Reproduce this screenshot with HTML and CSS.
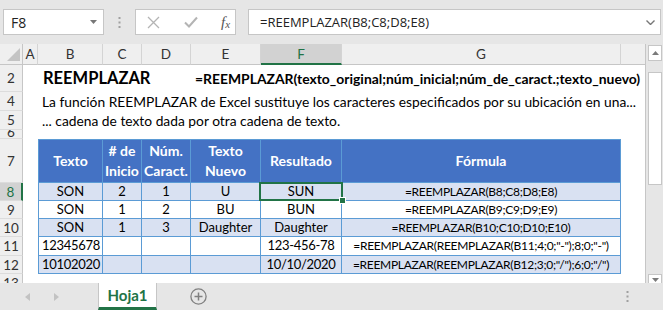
FILE: index.html
```html
<!DOCTYPE html>
<html>
<head>
  <title>REEMPLAZAR - Hoja1</title>
  <meta charset="UTF-8">
  <link rel="stylesheet" href="styles.css">
</head>
<body>
  <div class="app">
    <div class="formula-bar">
      <div class="name-box">
        <span>F8</span>
        <svg width="7" height="4" viewBox="0 0 7 4"><path d="M0 0h7L3.5 4z" fill="#777"/></svg>
      </div>
      <div class="grip">
        <svg width="3" height="11" viewBox="0 0 3 11"><rect x="0.5" y="0" width="2" height="2" fill="#a0a0a0"/><rect x="0.5" y="4.5" width="2" height="2" fill="#a0a0a0"/><rect x="0.5" y="9" width="2" height="2" fill="#a0a0a0"/></svg>
      </div>
      <div class="fx-buttons">
        <svg class="fx-icon" width="13" height="13" viewBox="0 0 13 13"><path d="M1 1l11 11M12 1L1 12" stroke="#b4b4b4" stroke-width="1.3" fill="none"/></svg>
        <svg class="fx-icon" width="14" height="12" viewBox="0 0 14 12"><path d="M1 6.5l4 4L13 1.5" stroke="#b4b4b4" stroke-width="2" fill="none"/></svg>
        <span class="fx-label">f<sub>x</sub></span>
      </div>
      <div class="formula-input">
        <span>=REEMPLAZAR(B8;C8;D8;E8)</span>
        <svg width="9" height="5" viewBox="0 0 9 5"><path d="M0.5 0.5l4 4 4-4" stroke="#777" stroke-width="1.4" fill="none"/></svg>
      </div>
    </div>

    <div class="workspace">
      <div class="sheet">
        <div class="row col-heads">
          <div class="rh corner"><svg width="13" height="13" viewBox="0 0 13 13"><path d="M13 0v13H0z" fill="#c4c4c4"/></svg></div>
          <div class="hd ca">A</div>
          <div class="hd cb">B</div>
          <div class="hd cc">C</div>
          <div class="hd cd">D</div>
          <div class="hd ce">E</div>
          <div class="hd cf selected">F</div>
          <div class="hd cg">G</div>
          <div class="hd ch"></div>
        </div>

        <div class="row r2">
          <div class="rh">2</div>
          <div class="c ca"></div>
          <div class="c cb"><span class="title">REEMPLAZAR</span></div>
          <div class="c cc"></div>
          <div class="c cd"></div>
          <div class="c ce"><span class="syntax">=REEMPLAZAR(texto_original;núm_inicial;núm_de_caract.;texto_nuevo)</span></div>
        </div>
        <div class="row r4">
          <div class="rh">4</div>
          <div class="c ca"></div>
          <div class="c cb"><span class="desc">La función REEMPLAZAR de Excel sustituye los caracteres especificados por su ubicación en una...</span></div>
        </div>
        <div class="row r5">
          <div class="rh">5</div>
          <div class="c ca"></div>
          <div class="c cb"><span class="desc">... cadena de texto dada por otra cadena de texto.</span></div>
        </div>
        <div class="row r6">
          <div class="rh">6</div>
        </div>

        <div class="row r7">
          <div class="rh">7</div>
          <div class="c ca"></div>
          <div class="t th cb first">Texto</div>
          <div class="t th cc"># de<br>Inicio</div>
          <div class="t th cd">Núm.<br>Caract.</div>
          <div class="t th ce">Texto<br>Nuevo</div>
          <div class="t th cf">Resultado</div>
          <div class="t th cg">Fórmula</div>
        </div>
        <div class="row data band">
          <div class="rh active">8</div>
          <div class="c ca"></div>
          <div class="t cb first">SON</div>
          <div class="t cc">2</div>
          <div class="t cd">1</div>
          <div class="t ce">U</div>
          <div class="t cf current">SUN<span class="sel"><span class="handle"></span></span></div>
          <div class="t cg formula">=REEMPLAZAR(B8;C8;D8;E8)</div>
        </div>
        <div class="row data">
          <div class="rh">9</div>
          <div class="c ca"></div>
          <div class="t cb first">SON</div>
          <div class="t cc">1</div>
          <div class="t cd">2</div>
          <div class="t ce">BU</div>
          <div class="t cf">BUN</div>
          <div class="t cg formula">=REEMPLAZAR(B9;C9;D9;E9)</div>
        </div>
        <div class="row data band">
          <div class="rh">10</div>
          <div class="c ca"></div>
          <div class="t cb first">SON</div>
          <div class="t cc">1</div>
          <div class="t cd">3</div>
          <div class="t ce">Daughter</div>
          <div class="t cf">Daughter</div>
          <div class="t cg formula">=REEMPLAZAR(B10;C10;D10;E10)</div>
        </div>
        <div class="row data r11">
          <div class="rh">11</div>
          <div class="c ca"></div>
          <div class="t cb first left num">12345678</div>
          <div class="t cc"></div>
          <div class="t cd"></div>
          <div class="t ce"></div>
          <div class="t cf num">123-456-78</div>
          <div class="t cg formula">=REEMPLAZAR(REEMPLAZAR(B11;4;0;"-");8;0;"-")</div>
        </div>
        <div class="row data band">
          <div class="rh">12</div>
          <div class="c ca"></div>
          <div class="t cb first left num">10102020</div>
          <div class="t cc"></div>
          <div class="t cd"></div>
          <div class="t ce"></div>
          <div class="t cf num">10/10/2020</div>
          <div class="t cg formula">=REEMPLAZAR(REEMPLAZAR(B12;3;0;"/");6;0;"/")</div>
        </div>
        <div class="row data">
          <div class="rh">13</div>
        </div>
      </div>

      <div class="vscroll">
        <div class="sb-btn"><svg width="7" height="4" viewBox="0 0 7 4"><path d="M0 4h7L3.5 0z" fill="#7a7a7a"/></svg></div>
        <div class="sb-thumb"></div>
        <div class="sb-space"></div>
        <div class="sb-btn down"><svg width="7" height="4" viewBox="0 0 7 4"><path d="M0 0h7L3.5 4z" fill="#7a7a7a"/></svg></div>
      </div>
    </div>

    <div class="tabs">
      <div class="tab-nav">
        <svg width="5" height="8" viewBox="0 0 5 8"><path d="M5 0v8L0 4z" fill="#c2c2c2"/></svg>
        <svg width="5" height="8" viewBox="0 0 5 8"><path d="M0 0v8l5-4z" fill="#c2c2c2"/></svg>
      </div>
      <div class="sheet-tab">Hoja1</div>
      <div class="add-sheet">
        <svg width="17" height="17" viewBox="0 0 17 17"><circle cx="8.5" cy="8.5" r="7.6" stroke="#808080" stroke-width="1.3" fill="none"/><path d="M8.5 4.5v8M4.5 8.5h8" stroke="#808080" stroke-width="1.5"/></svg>
      </div>
      <div class="tab-grip">
        <svg width="3" height="11" viewBox="0 0 3 11"><rect x="0.5" y="0" width="2" height="2" fill="#a0a0a0"/><rect x="0.5" y="4.5" width="2" height="2" fill="#a0a0a0"/><rect x="0.5" y="9" width="2" height="2" fill="#a0a0a0"/></svg>
      </div>
    </div>
  </div>
</body>
</html>
```

FILE: styles.css
```css
body {
  margin: 0;
  padding: 0;
  background-color: #e6e6e6;
  font-family: Lato, "Open Sans", sans-serif;
}

.app {
  width: 663px;
  height: 310px;
  overflow: hidden;
}

/* formula bar */

.formula-bar {
  height: 44px;
  box-sizing: border-box;
  padding: 9px 0 0 3px;
  display: flex;
  align-items: flex-start;
  font-family: "Open Sans", sans-serif;
  font-size: 13px;
  color: #222;
}

.name-box,
.fx-buttons,
.formula-input {
  height: 26px;
  box-sizing: border-box;
  background-color: #fff;
  border: 1px solid #c6c6c6;
  display: flex;
  align-items: center;
}

.name-box {
  width: 101px;
  padding: 0 6px 0 7px;
  justify-content: space-between;
  font-size: 14px;
}

.grip {
  width: 31px;
  height: 26px;
  display: flex;
  align-items: center;
  justify-content: center;
}

.fx-buttons {
  width: 101px;
  padding: 0 0 0 11px;
  gap: 24px;
}

.fx-label {
  font-family: "Liberation Serif", serif;
  font-style: italic;
  font-size: 15px;
  color: #555;
  margin-left: -1px;
}

.fx-label sub {
  font-size: 11px;
  vertical-align: -1px;
}

.formula-input {
  width: 413px;
  margin-left: 12px;
  padding: 0 5px 0 11px;
  justify-content: space-between;
}

/* sheet */

.workspace {
  height: 239px;
  display: flex;
}

.sheet {
  width: 646px;
  overflow: hidden;
  background-color: #fff;
  border-right: 1px solid #c6c6c6;
  box-sizing: border-box;
  font-size: 13px;
  color: #000;
}

.row {
  display: flex;
  flex-shrink: 0;
}

.rh {
  width: 23px;
  flex-shrink: 0;
  box-sizing: border-box;
  background-color: #efefef;
  border-right: 1px solid #c6c6c6;
  border-bottom: 1px solid #dcdcdc;
  display: flex;
  align-items: center;
  justify-content: center;
  color: #333;
  font-size: 13.5px;
  overflow: hidden;
}

.rh.active {
  background-color: #d2d2d2;
  color: #217346;
  border-right: 2px solid #217346;
}

.ca { width: 15px; }
.cb { width: 65px; }
.cc { width: 39px; }
.cd { width: 49px; }
.ce { width: 70px; }
.cf { width: 81px; }
.cg { width: 279px; }
.ch { flex: 1; }

.c,
.t,
.hd {
  flex-shrink: 0;
  box-sizing: border-box;
}

.col-heads {
  height: 21px;
}

.corner {
  align-items: flex-end;
  justify-content: flex-end;
  padding: 0 2px 3px 0;
  border-bottom: 1px solid #c6c6c6;
}

.hd {
  background-color: #efefef;
  border-right: 1px solid #d4d4d4;
  border-bottom: 1px solid #c6c6c6;
  text-align: center;
  line-height: 20px;
  font-size: 13.5px;
  color: #333;
}

.hd.selected {
  background-color: #d2d2d2;
  color: #217346;
  border-bottom: 2px solid #217346;
}

.hd.ch {
  border-right: none;
}

.r2 { height: 27px; }
.r4, .r5 { height: 19px; }
.r6 { height: 9px; }
.r7 { height: 44px; }
.data { height: 18px; }
.r11 { height: 19px; }

.r6 .rh {
  align-items: flex-end;
  line-height: 12px;
}

.c {
  white-space: nowrap;
}

.title {
  display: block;
  padding-left: 5px;
  font-weight: bold;
  font-size: 16.5px;
  line-height: 27px;
}

.syntax {
  display: block;
  padding: 4px 0 0 4px;
  font-weight: bold;
  font-size: 13.9px;
  line-height: 20px;
}

.desc {
  display: block;
  padding-left: 4px;
  font-size: 13.8px;
  line-height: 19px;
}

/* table */

.t {
  border-right: 1px solid #5b9bd5;
  border-bottom: 1px solid #5b9bd5;
  text-align: center;
  line-height: 17px;
  white-space: nowrap;
}

.t.first {
  border-left: 1px solid #5b9bd5;
}

.t.left {
  text-align: left;
  padding-left: 3px;
}

.num {
  letter-spacing: -0.3px;
}

.formula {
  font-size: 12px;
  letter-spacing: -0.3px;
}

.th {
  background-color: #4472c4;
  border-top: 1px solid #5b9bd5;
  color: #fff;
  font-weight: bold;
  font-size: 14px;
  line-height: 20px;
  display: flex;
  align-items: center;
  justify-content: center;
}

.band .t {
  background-color: #d9e1f2;
}

.current {
  position: relative;
}

.sel {
  position: absolute;
  left: -2px;
  top: -1px;
  right: -2px;
  bottom: -1px;
  border: 2px solid #217346;
}

.handle {
  position: absolute;
  right: -5px;
  bottom: -5px;
  width: 5px;
  height: 5px;
  background-color: #217346;
  border: 1px solid #fff;
}

/* vertical scrollbar */

.vscroll {
  width: 17px;
  box-sizing: border-box;
  padding: 1px 1px 0 2px;
  display: flex;
  flex-direction: column;
  overflow: hidden;
}

.sb-btn {
  height: 16px;
  flex-shrink: 0;
  box-sizing: border-box;
  background-color: #fff;
  border: 1px solid #c6c6c6;
  display: flex;
  justify-content: center;
  padding-top: 5px;
}

.sb-btn.down {
  margin-bottom: -7px;
  padding-top: 3px;
}

.sb-thumb {
  height: 113px;
  margin-top: 11px;
  flex-shrink: 0;
  box-sizing: border-box;
  background-color: #fff;
  border: 1px solid #c6c6c6;
}

.sb-space {
  flex: 1;
}

/* sheet tabs */

.tabs {
  height: 27px;
  display: flex;
  align-items: stretch;
}

.tab-nav {
  width: 98px;
  display: flex;
  align-items: center;
  padding-left: 25px;
  gap: 24px;
  box-sizing: border-box;
}

.sheet-tab {
  width: 59px;
  box-sizing: border-box;
  background-color: #fff;
  border-left: 1px solid #c6c6c6;
  border-right: 1px solid #c6c6c6;
  border-bottom: 3px solid #217346;
  color: #217346;
  font-weight: bold;
  font-size: 15px;
  text-align: center;
  line-height: 25px;
}

.add-sheet {
  width: 84px;
  display: flex;
  align-items: center;
  padding-left: 33px;
  box-sizing: border-box;
}

.tab-grip {
  flex: 1;
  display: flex;
  align-items: center;
  justify-content: flex-end;
  padding-right: 34px;
}
```
